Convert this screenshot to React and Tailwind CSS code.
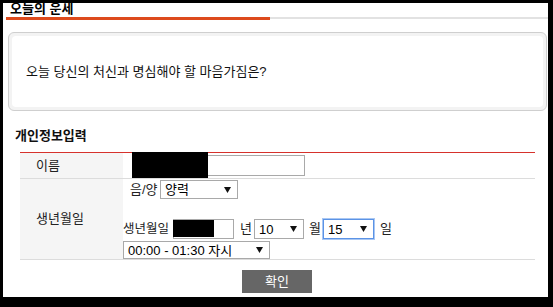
import React from "react";

const FONT = "font-['Liberation_Sans','Noto_Sans_CJK_KR',sans-serif]";

function Arrow() {
  return (
    <svg width="7" height="6" viewBox="0 0 7 6" className="shrink-0">
      <polygon points="0,0 7,0 3.5,6" fill="#111" />
    </svg>
  );
}

function FakeSelect({ value, className, focused }) {
  return (
    <div
      className={
        "flex items-center justify-between bg-white pl-[4px] pr-[6px] text-[13px] leading-none text-black " +
        (focused
          ? "border border-[#5b93e6] shadow-[0_0_0_1px_#a9c7f3]"
          : "border border-[#a9a9a9]") +
        " " +
        className
      }
    >
      <span className="whitespace-nowrap">{value}</span>
      <Arrow />
    </div>
  );
}

export default function App() {
  return (
    <div className={`w-[553px] h-[307px] bg-black pt-[3px] pl-[3px] pr-[5px] pb-[10px] ${FONT}`}>
      <div className="w-full h-full bg-white flex flex-col text-[#222]">
        {/* title */}
        <div className="h-[14px] pl-[7px] text-[13px] font-bold leading-[12px] text-black">
          오늘의 운세
        </div>
        <div className="flex items-start">
          <div className="ml-[3px] w-[264px] h-[3px] bg-[#dd4a1c]" />
          <div className="flex-1 h-[2px] bg-[#e2e2e2]" />
        </div>

        {/* question box */}
        <div className="mt-[12px] ml-[5px] mr-[1px] h-[79px] rounded-[6px] border border-[#cfcfcf] bg-[#f3f3f3] p-[3px]">
          <div className="h-full rounded-[4px] bg-white flex items-center pl-[14px] text-[13px] text-[#111]">
            오늘 당신의 처신과 명심해야 할 마음가짐은?
          </div>
        </div>

        {/* heading */}
        <div className="mt-[17px] ml-[12px] h-[16px] text-[13px] font-bold leading-[16px] text-[#111]">
          개인정보입력
        </div>

        {/* table */}
        <div className="mt-[8px] ml-[17px] w-[515px] border-t border-[#d6322c] text-[13px] text-[#222]">
          <div className="flex h-[25px] border-b border-[#dcdcdc] box-content">
            <div className="w-[103px] bg-[#f5f5f5] flex items-center pl-[16px]">이름</div>
            <div className="flex-1 flex items-center">
              <div className="relative ml-[9px] w-[173px] h-[21px] border border-[#a9a9a9] bg-white">
                <div className="absolute left-[-1px] top-[-4px] w-[76px] h-[26px] bg-black" />
              </div>
            </div>
          </div>
          <div className="flex h-[80px] border-b border-[#dcdcdc] box-content">
            <div className="w-[103px] bg-[#f5f5f5] flex items-center pl-[16px]">생년월일</div>
            <div className="flex-1 flex flex-col pt-[1px]">
              <div className="flex items-center h-[19px]">
                <span className="ml-[7px] w-[30px]">음/양</span>
                <FakeSelect value="양력" className="w-[78px] h-[19px]" />
              </div>
              <div className="mt-[20px] flex items-center h-[20px]">
                <span className="w-[50px] whitespace-nowrap text-[12.5px]">생년월일</span>
                <div className="relative w-[61px] h-[20px] border border-[#a9a9a9] bg-white">
                  <div className="absolute left-[-1px] top-[0px] w-[41px] h-[17px] bg-black" />
                </div>
                <span className="ml-[6px] w-[14px]">년</span>
                <FakeSelect value="10" className="w-[50px] h-[20px]" />
                <span className="ml-[5px] w-[14px]">월</span>
                <FakeSelect value="15" className="w-[51px] h-[20px]" focused />
                <span className="ml-[6px]">일</span>
              </div>
              <div className="mt-[2px] flex items-center h-[18px]">
                <FakeSelect value="00:00 - 01:30 자시" className="w-[147px] h-[18px]" />
              </div>
            </div>
          </div>
        </div>

        {/* button */}
        <div className="mt-[10px] flex justify-center pl-[3px]">
          <div className="w-[70px] h-[23px] bg-[#666666] text-white text-[13px] flex items-center justify-center">
            확인
          </div>
        </div>
      </div>
    </div>
  );
}
